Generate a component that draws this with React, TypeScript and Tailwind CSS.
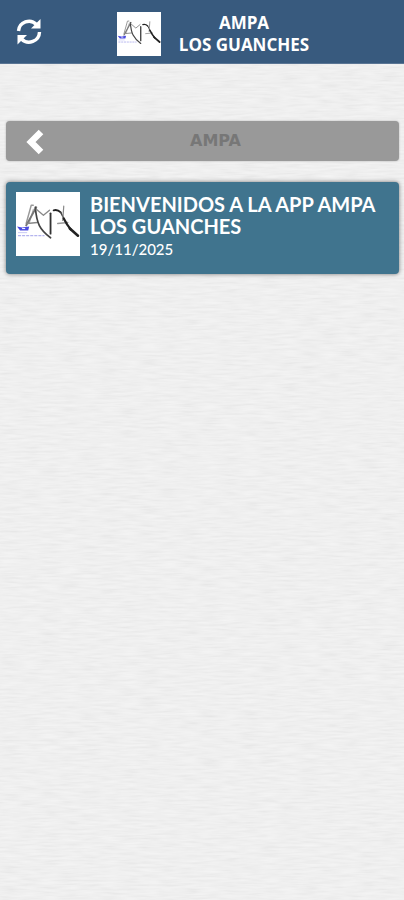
import { useState } from "react";

const news = [
  { id: 1, title: "BIENVENIDOS A LA APP AMPA LOS GUANCHES", date: "19/11/2025" },
];

function Logo({ className }: { className?: string }) {
  return (
    <svg viewBox="0 0 63 63" className={className} role="img" aria-label="Logo">
      <rect width="63" height="63" fill="#fff" />
      <g fill="none" stroke="#222" strokeLinecap="round" strokeLinejoin="round">
        <path d="M10 31 L15 13 L17 13" stroke="#999" strokeWidth="1.4" />
        <path d="M13 31 L17 17" stroke="#aaa" strokeWidth="1" />
        <path d="M10 33 L20 15" stroke="#777" strokeWidth="1.8" />
        <path d="M11 31 L21 30" stroke="#888" strokeWidth="1.3" />
        <path d="M19 15 Q20 27 23 33 T34 45" stroke="#444" strokeWidth="1.7" />
        <path d="M20 17 L27 23 L33 18" stroke="#888" strokeWidth="1.3" />
        <path d="M34 21 L34 41" stroke="#333" strokeWidth="1.8" />
        <path d="M37 18 Q41 17 44 20" strokeWidth="1.8" />
        <path d="M44 20 L47 26" stroke="#444" strokeWidth="1.4" />
        <path d="M47 14 L46 28" stroke="#888" strokeWidth="1.2" />
        <path d="M41 31 L51 30" stroke="#999" strokeWidth="1.3" />
        <path d="M47 26 Q50 32 54 37" strokeWidth="2.2" />
        <path d="M53 36 L61 43" strokeWidth="2.6" />
      </g>
      <path d="M1 34 L6 35 L13 34 L12 38 L4 38 Z" fill="#4a4ae0" />
      <path d="M6 36 L9 36" stroke="#fff" strokeWidth="1" />
      <path d="M2 40 H11" stroke="#c9c9f5" strokeWidth="1" />
      <path d="M2 43 H28" stroke="#b4b4ee" strokeWidth="1.3" strokeDasharray="3 1" />
    </svg>
  );
}

function PaperTexture() {
  return (
    <svg className="absolute inset-0 -z-10 h-full w-full" aria-hidden="true">
      <filter id="paper" x="0" y="0" width="100%" height="100%">
        <feTurbulence type="fractalNoise" baseFrequency="0.05 0.45" numOctaves="2" seed="4" />
        <feColorMatrix
          colorInterpolationFilters="sRGB"
          values="0.09 0 0 0 0.871  0.09 0 0 0 0.871  0.09 0 0 0 0.871  0 0 0 0 1"
        />
      </filter>
      <rect width="100%" height="100%" filter="url(#paper)" />
    </svg>
  );
}

function RefreshIcon() {
  return (
    <svg viewBox="0 0 26 26" className="h-[26px] w-[26px]" aria-hidden="true">
      <g fill="none" stroke="#fff" strokeWidth="3.4">
        <path d="M2.500 12 A10.500 10.500 0 0 1 20.500 5.500" />
        <path d="M23.500 13 A10.500 10.500 0 0 1 5.500 20" />
      </g>
      <path d="M24.500 0 V9.500 H15 Z" fill="#fff" />
      <path d="M1.500 25.500 V16 H11 Z" fill="#fff" />
    </svg>
  );
}

export default function App() {
  const [items, setItems] = useState(news);

  return (
    <div className="relative isolate min-h-screen bg-[#efefef] font-['Lato',sans-serif]">
      <PaperTexture />
      <header className="flex h-16 items-center border-b border-[#5a7594] bg-[#385a7e] pr-5 pl-4">
        <button
          type="button"
          aria-label="Actualizar"
          onClick={() => setItems([...news])}
          className="cursor-pointer"
        >
          <RefreshIcon />
        </button>
        <div className="flex flex-1 items-center justify-center gap-[18px] pt-1">
          <Logo className="h-11 w-11" />
          <h1 className="text-center font-['Open_Sans',sans-serif] text-[17px] leading-[22px] font-bold text-white">
            AMPA
            <br />
            LOS GUANCHES
          </h1>
        </div>
      </header>

      <main className="pt-[57px] pr-[5px] pl-1.5">
        <div className="flex h-10 items-center rounded bg-[#999] pr-3 pl-5 shadow-[0_0_2px_#aaa]">
          <button type="button" aria-label="Volver" className="cursor-pointer">
            <svg viewBox="0 0 18 26" className="mt-0.5 h-[26px] w-[18px]" aria-hidden="true">
              <path d="M15 3 L5 13 L15 23" fill="none" stroke="#fff" strokeWidth="6.500" />
            </svg>
          </button>
          <h2 className="flex-1 text-center font-['DejaVu_Sans',sans-serif] text-base font-bold text-[#777]">
            AMPA
          </h2>
        </div>

        <ul className="mt-[21px] flex flex-col gap-3">
          {items.map((item) => (
            <li key={item.id}>
              <a
                href="#"
                className="flex min-h-[92px] gap-2.5 rounded bg-[#40748e] p-2.5 text-white shadow-[0_0_4px_#777]"
              >
                <Logo className="h-16 w-16 shrink-0" />
                <div>
                  <h3 className="pt-px text-xl leading-[22px] font-bold">{item.title}</h3>
                  <p className="text-[15px] leading-6 font-medium">{item.date}</p>
                </div>
              </a>
            </li>
          ))}
        </ul>
      </main>
    </div>
  );
}
